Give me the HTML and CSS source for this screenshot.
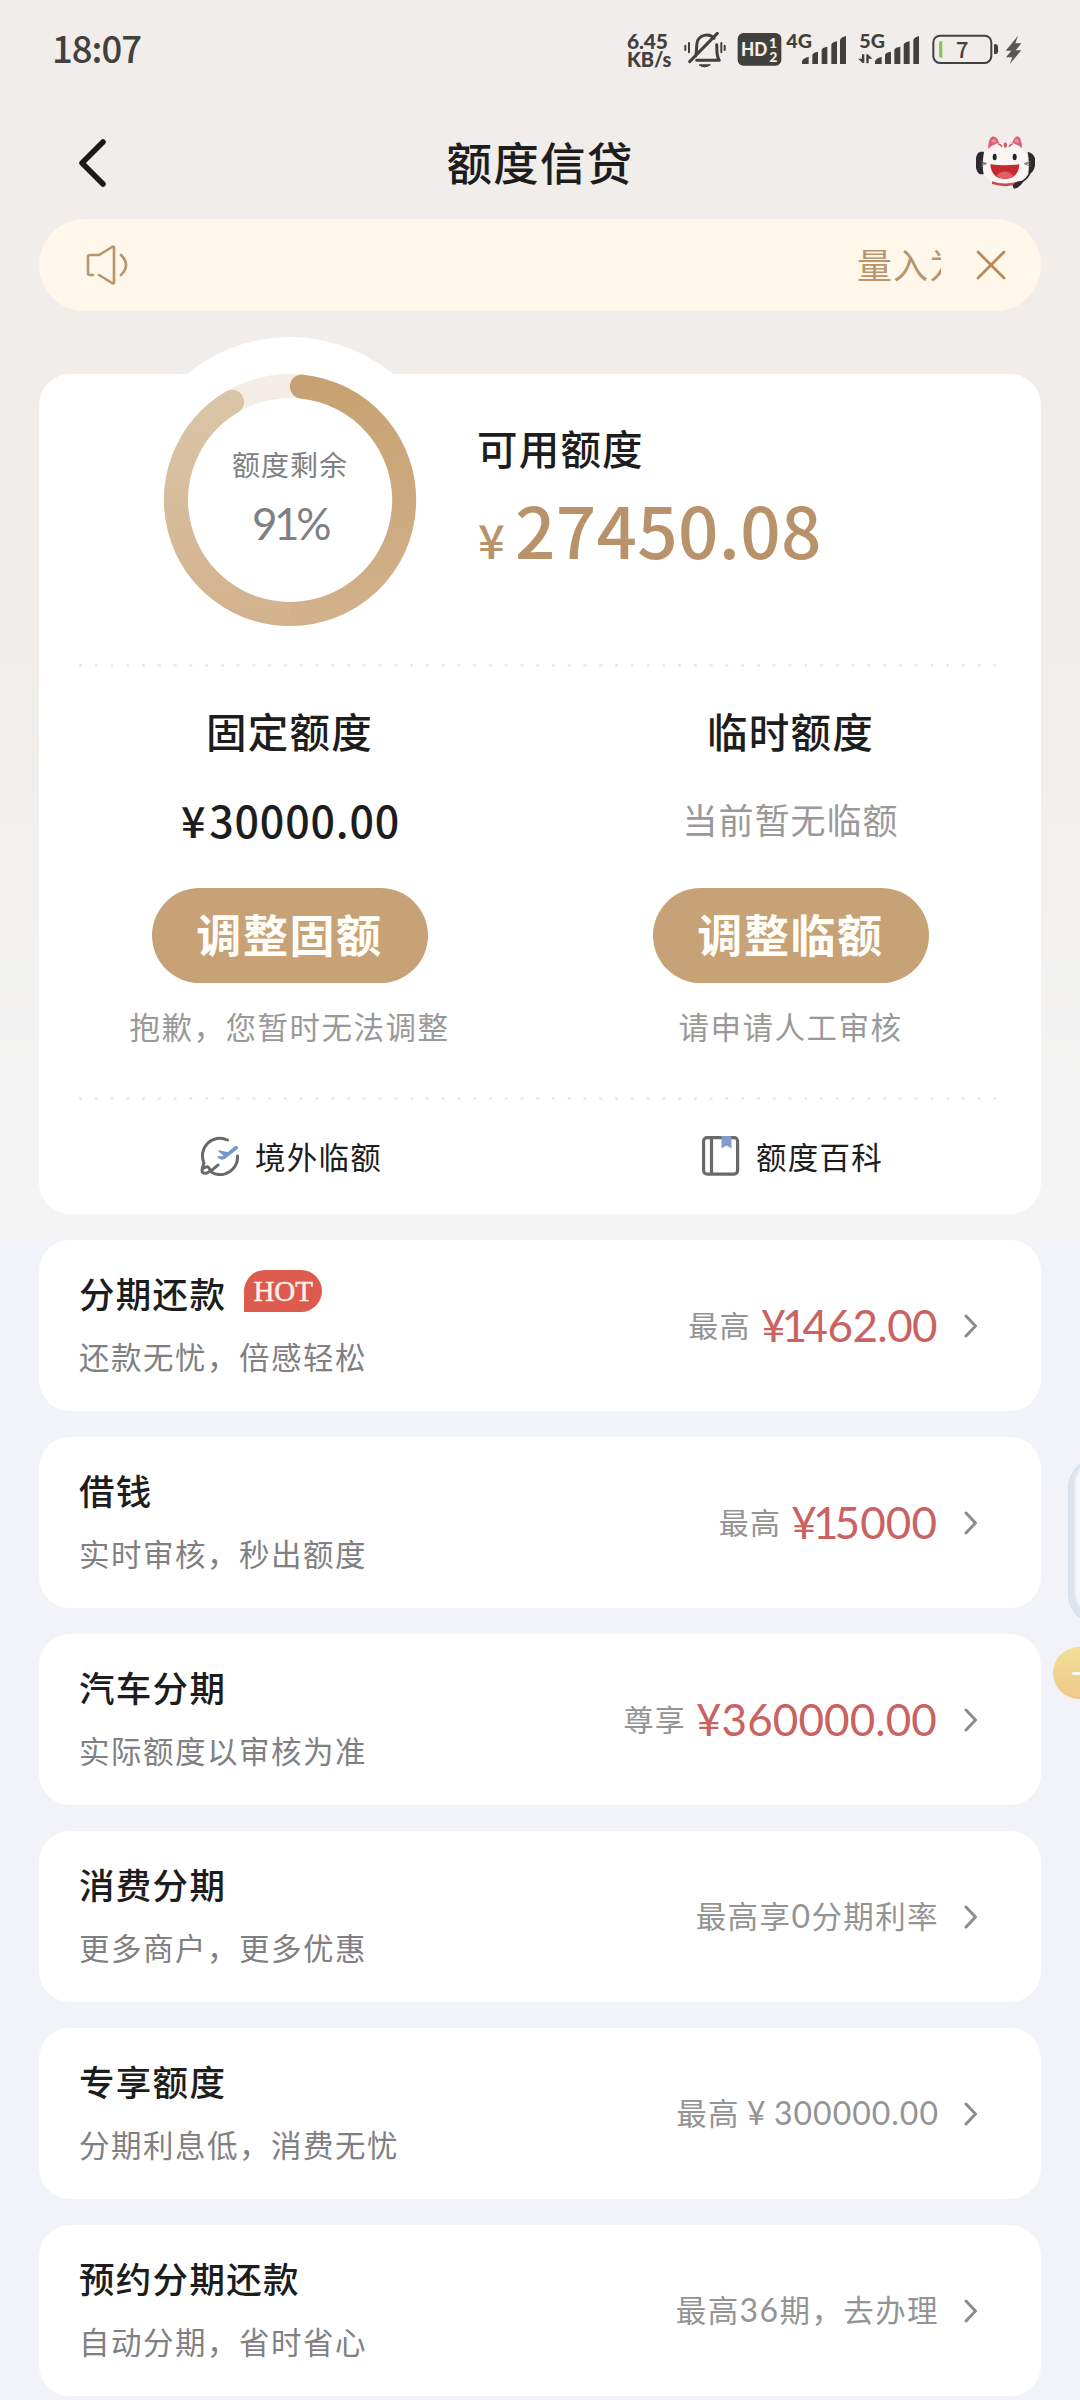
FILE: index.html
```html
<!DOCTYPE html>
<html lang="zh-CN">
<head>
<meta charset="utf-8">
<title>额度信贷</title>
<link rel="stylesheet" href="styles.css">
</head>
<body>
<div class="screen">
  <div class="hero">
    <header class="status">
      <span class="clock">18:07</span>
      <div class="status-icons">
        <div class="speed"><span class="rate">6.45</span><span class="unit">KB/s</span></div>
        <svg width="53" height="40" viewBox="240 90 159 120" fill="none" stroke="#42403c" stroke-linecap="round" stroke-width="9">
          <path d="M287 168c4-11 1-30 5-43 5-18 34-29 50-10M350 134c2 21-2 32 8 47H290M269 185l83-85" stroke-linejoin="round"/>
          <path d="M298 195q16 12 32 0z" fill="#42403c" stroke-width="3"/>
          <path d="M256 137v13M267 129v28M364 129v28M374 137v13" stroke-width="6"/>
        </svg>
        <svg width="50" height="40" viewBox="399 90 150 120">
          <rect x="413" y="99" width="131" height="98" rx="17" fill="#42403c"/>
          <g class="badge-text"><text x="423" y="169" font-size="56" textLength="79" lengthAdjust="spacingAndGlyphs">HD</text><text x="507" y="144" font-size="42">1</text><text x="508" y="186" font-size="42">2</text></g>
        </svg>
        <svg width="72" height="40" viewBox="549 90 216 120" fill="#42403c">
          <text class="net" x="559" y="144" font-size="57" textLength="77" lengthAdjust="spacingAndGlyphs">4G</text>
          <path d="M606 192v-8q2-9 20-14v22zM637 192v-28q3-7 17-9v37zM665 192v-43q3-7 17-9v52zM694 192v-58q3-8 17-10v68zM720 192v-72q3-9 18-12v84z"/>
        </svg>
        <svg width="73" height="40" viewBox="765 90 219 120" fill="#42403c">
          <text class="net" x="778" y="144" font-size="57" textLength="77" lengthAdjust="spacingAndGlyphs">5G</text>
          <path d="M825 192v-8q2-9 20-14v22zM855 192v-28q3-7 18-9v37zM883 192v-43q3-7 18-9v52zM911 192v-58q3-8 18-10v68zM940 192v-72q3-9 17-12v84z"/>
          <path d="M786 163h7v26h-5l-14-13h12zM799 190v-27h5l13 13h-11v14z"/>
        </svg>
        <svg width="100" height="40" viewBox="984 90 300 120">
          <rect x="1000" y="107" width="174" height="82" rx="20" fill="none" stroke="#42403c" stroke-width="6"/>
          <path d="M1182 133h5q7 0 7 7v15q0 7-7 7h-5z" fill="#42403c"/>
          <path d="M1027 123v50h-3q-7 0-7-8v-34q0-8 7-8z" fill="#83c857"/>
          <text class="level" x="1068" y="173" font-size="66">7</text>
          <path d="M1254 107l-37 45h17l-16 20h19l-8 21 35-42h-17l17-21h-18z" fill="#5a5855"/>
        </svg>
      </div>
    </header>
    <nav class="nav">
      <svg class="back" width="40" height="56" viewBox="0 0 40 56"><path d="M30 7L9 28l21 21" fill="none" stroke="#1b1a18" stroke-width="5.5" stroke-linecap="round" stroke-linejoin="round"/></svg>
      <h1>额度信贷</h1>
      <svg class="mascot" width="66" height="60" viewBox="1110 400 198 180">
        <path d="M1288 510q-10 30-37 40" stroke="#2c2a2c" stroke-width="5" fill="none"/>
        <path d="M1158 450q1-38 16-40 12 2 17 19h40q6-18 16-19 13 4 13 40z" fill="#da6174"/>
        <path d="M1168 428q3-12 8-11t7 12M1236 428q3-12 9-11t6 13" fill="#e88f99"/>
        <ellipse cx="1210" cy="493" rx="71" ry="66" fill="#fbf5f5"/>
        <path d="M1146 456h-12q-10 4-12 20v28q3 16 13 20h10q-6-30 1-68zM1277 456q17 4 22 20v23q-5 22-20 24 4-34-2-67z" fill="#2c2a2c"/>
        <path d="M1170 545q39 13 79 0v8q-39 13-79 0z" fill="#ca4a50"/>
        <path d="M1188 433q8 0 12 9M1232 433q-7 0-11 9" stroke="#cf5965" stroke-width="4" fill="none"/><ellipse cx="1210" cy="436" rx="5" ry="8" fill="#cf5965"/>
        <ellipse cx="1178" cy="472" rx="6" ry="10" fill="#242224"/><ellipse cx="1238" cy="472" rx="6" ry="10" fill="#242224"/>
        <path d="M1165 494q43 6 87 0-2 43-43 44-41-1-44-44z" fill="#c62a2d"/><path d="M1183 528q25-25 51 0-25 20-51 0z" fill="#df6260"/>
        <path d="M1135 484l18 8-18 8M1138 491h15M1287 484l-20 8 20 8M1284 491h-16" stroke="#6c686a" stroke-width="2.5" fill="none"/>
        <path d="M1233 556q6-8 22-13l8 4q-10 17-27 20-5-5-3-11z" fill="#2c2a2c"/>
      </svg>
    </nav>

    <div class="notice">
      <svg width="46" height="44" viewBox="0 0 46 44" fill="none" stroke="#b8956c" stroke-width="2.6" stroke-linecap="round" stroke-linejoin="round"><path d="M9 32H6q-2 0-2-2V14q0-2 2-2h9L28 4q2-1 2 1v34q0 2-2 1L15 32M37 12q10 10 0 20"/></svg>
      <div class="ticker"><span>量入为出</span></div>
      <svg width="32" height="32" viewBox="0 0 32 32" fill="none" stroke="#b8895a" stroke-width="2.8" stroke-linecap="round"><path d="M3 3l26 26M29 3L3 29"/></svg>
    </div>

    <section class="quota">
      <div class="summary">
        <div class="gauge">
          <svg width="326" height="326" viewBox="-163 -163 326 326" fill="none">
            <defs>
              <linearGradient id="r" gradientUnits="userSpaceOnUse" x1="0" y1="-126" x2="0" y2="126"><stop offset="0" stop-color="#c7a171"/><stop offset="1" stop-color="#d2b28c"/></linearGradient>
              <linearGradient id="l" gradientUnits="userSpaceOnUse" x1="0" y1="-126" x2="0" y2="126"><stop offset="0" stop-color="#dcc7ab"/><stop offset="1" stop-color="#d2b28c"/></linearGradient>
            </defs>
            <circle r="163" fill="#fff"/>
            <circle r="114" stroke="#f3ede6" stroke-width="24"/>
            <path d="M0 114A114 114 0 0 1-57.9-98.2" stroke="url(#l)" stroke-width="24" stroke-linecap="round"/>
            <path d="M11.9-113.4A114 114 0 0 1 0 114" stroke="url(#r)" stroke-width="24"/>
            <circle cx="11.9" cy="-113.4" r="12" fill="#c7a171"/>
          </svg>
          <div class="gauge-label"><span>额度剩余</span><b>91%</b></div>
        </div>
        <div class="available">
          <h2>可用额度</h2>
          <p class="balance"><span>¥</span>27450.08</p>
        </div>
      </div>
      <div class="dots"></div>
      <div class="columns">
        <div class="column">
          <h2>固定额度</h2>
          <p class="fixed">¥<span>30000.00</span></p>
          <button>调整固额</button>
          <p class="note">抱歉，您暂时无法调整</p>
        </div>
        <div class="column">
          <h2>临时额度</h2>
          <p class="none">当前暂无临额</p>
          <button>调整临额</button>
          <p class="note">请申请人工审核</p>
        </div>
      </div>
      <div class="dots"></div>
      <div class="links">
        <a><svg width="40" height="40" viewBox="0 0 40 40" fill="none" stroke="#69696b" stroke-width="3" stroke-linecap="round"><path d="M27.500 4A17.500 17.500 0 0 0 4 27C1 35 1 38 7 37Q13 34 18 29M4 32Q8 29 9.500 33M37.500 20A17.500 17.500 0 0 1 12 36.500"/><path d="M18 21h5l12-10q3-1 2 1.500L25 22l-3 1zM19 15l9 2-3 3z" fill="#7399ca" stroke="#7399ca" stroke-width="1.500" stroke-linejoin="round"/></svg>境外临额</a>
        <a><svg width="40" height="42" viewBox="0 0 40 42" fill="none" stroke="#69696b" stroke-width="3.200"><rect x="2.600" y="2.600" width="34" height="36.500" rx="3.500"/><path d="M10.500 3v36"/><path d="M20.500 1h10v12.500l-5-3-5 3z" fill="#809ccb" stroke="none"/></svg>额度百科</a>
      </div>
    </section>
  </div>

  <main class="list">
    <a class="item"><div class="text"><h3>分期还款<i class="hot">HOT</i></h3><p>还款无忧，倍感轻松</p></div><span class="hint">最高</span><span class="money tight">¥<i>1</i>462.00</span><svg class="go" viewBox="0 0 14 24"><path d="M2 2l9.500 10L2 22"/></svg></a>
    <a class="item"><div class="text"><h3>借钱</h3><p>实时审核，秒出额度</p></div><span class="hint">最高</span><span class="money">¥<i>1</i>5000</span><svg class="go" viewBox="0 0 14 24"><path d="M2 2l9.500 10L2 22"/></svg></a>
    <a class="item"><div class="text"><h3>汽车分期</h3><p>实际额度以审核为准</p></div><span class="hint">尊享</span><span class="money">¥360000.00</span><svg class="go" viewBox="0 0 14 24"><path d="M2 2l9.500 10L2 22"/></svg></a>
    <a class="item"><div class="text"><h3>消费分期</h3><p>更多商户，更多优惠</p></div><span class="plain">最高享<em>0</em>分期利率</span><svg class="go" viewBox="0 0 14 24"><path d="M2 2l9.500 10L2 22"/></svg></a>
    <a class="item"><div class="text"><h3>专享额度</h3><p>分期利息低，消费无忧</p></div><span class="plain">最高<em class="yen">¥</em><em class="sum">300000.00</em></span><svg class="go" viewBox="0 0 14 24"><path d="M2 2l9.500 10L2 22"/></svg></a>
    <a class="item"><div class="text"><h3>预约分期还款</h3><p>自动分期，省时省心</p></div><span class="plain">最高<em>36</em>期，去办理</span><svg class="go" viewBox="0 0 14 24"><path d="M2 2l9.500 10L2 22"/></svg></a>
  </main>

  <div class="side-panel"></div>
  <div class="side-coin"><i></i></div>
</div>
</body>
</html>
```
FILE: styles.css
```css
* { box-sizing: border-box; margin: 0; padding: 0; }
body { font-family: "Noto Sans CJK SC", sans-serif; color: #1d1d1d; }
h1, h2, h3 { font-weight: 500; }
i, em { font-style: normal; }
svg { display: block; flex: none; }
.screen { position: relative; width: 1080px; height: 2400px; overflow: hidden; background: #f2f3f8; }

.hero { height: 1240px; padding: 0 39px; background: linear-gradient(#f0edea 0, #f0edea 620px, #f4f4f4 1120px); }
.status { height: 107px; margin: 0 -39px; padding: 0 52px 7px 52px; display: flex; align-items: center; justify-content: space-between; color: #42403c; }
.clock { font-weight: 500; font-size: 36.500px; line-height: 50px; letter-spacing: -1px; padding-bottom: 5px; }
.status-icons { display: flex; align-items: center; height: 40px; }
.speed { width: 53px; display: flex; flex-direction: column; font: 900 21px/19px Lato, sans-serif; }
.rate { letter-spacing: -.2px; }
.unit { font-size: 20px; letter-spacing: -.1px; }
.badge-text { fill: #f0edea; font-family: Lato, sans-serif; font-weight: 900; }
.net { font-family: Lato, sans-serif; font-weight: 900; }
.level { font-family: "Noto Sans CJK SC", sans-serif; font-weight: 500; fill: #42403c; }

.nav { height: 112px; display: grid; grid-template-columns: 66px 1fr 66px; align-items: center; padding: 0 3px 0 3px; }
.back { margin-left: 31px; }
.nav h1 { font-size: 45.500px; line-height: 60px; letter-spacing: 1.300px; padding-bottom: 5px; text-align: center; }

.notice { height: 92px; border-radius: 46px; background: #fef7ea; display: flex; align-items: center; padding: 0 34px 0 45px; }
.ticker { width: 84px; margin-left: auto; margin-right: 34px; overflow: hidden; white-space: nowrap; font-size: 35px; line-height: 50px; letter-spacing: 1px; color: #b8956c; padding-bottom: 3px; }

.quota { margin-top: 63px; height: 840px; width: 1002px; background: #fff; border-radius: 31px; display: flex; flex-direction: column; }
.summary { height: 290px; display: flex; padding-left: 88px; }
.gauge { margin-top: -37px; width: 326px; height: 326px; display: grid; }
.gauge > * { grid-area: 1 / 1; }
.gauge-label { display: flex; flex-direction: column; align-items: center; padding-top: 107px; color: #7f8083; font-size: 28px; line-height: 40px; letter-spacing: 1px; }
.gauge-label b { font: 400 44px/54px Lato, sans-serif; letter-spacing: -3.500px; margin-top: 12px; }
h2 { font-size: 40.500px; line-height: 60px; letter-spacing: 1.200px; }
.available { padding: 44px 0 0 24px; }
.balance { font-weight: 500; font-size: 71px; line-height: 90px; color: #b8926a; margin-top: 5px; letter-spacing: .3px; display: flex; align-items: baseline; }
.balance span { font-size: 47px; width: 38px; padding-left: 1px; }
.dots { height: 3px; margin: 0 45px 0 40px; background: radial-gradient(circle at 1.500px 1.500px, #eaeaea 1.300px, transparent 1.900px) 0 0 / 15.770px 3px repeat-x; }
.columns { display: grid; grid-template-columns: 1fr 1fr; height: 430px; }
.column { display: flex; flex-direction: column; align-items: center; padding-top: 34px; }
.column p { white-space: nowrap; }
.fixed, .none { height: 60px; line-height: 60px; margin-top: 28px; }
.fixed { font-size: 43px; font-weight: 500; letter-spacing: .8px; padding-left: 2px; }
.fixed span { margin-left: 3px; }
.none { font-size: 35px; letter-spacing: 1px; color: #999; }
button { width: 276px; height: 95px; margin-top: 39px; border: 0; border-radius: 48px; background: #c6a276; color: #fffdf8; font: 700 45px/60px "Noto Sans CJK SC", sans-serif; letter-spacing: 1.600px; padding-bottom: 4px; }
.note { font-size: 30.500px; line-height: 40px; letter-spacing: 1.500px; color: #999; margin-top: 23px; }
.links { height: 114px; display: grid; grid-template-columns: 1fr 1fr; padding-bottom: 3px; }
.links a { display: flex; align-items: center; justify-content: center; gap: 15px; font-size: 30.500px; letter-spacing: 1.300px; padding-left: 3px; }

.list { padding: 0 39px; display: flex; flex-direction: column; gap: 26px; }
.item { width: 1002px; height: 171px; border-radius: 31px; background: #fff; display: flex; align-items: center; padding: 0 63px 0 40px; white-space: nowrap; }
.text { flex: 1; align-self: flex-start; padding-top: 28px; }
h3 { font-size: 35.500px; line-height: 50px; letter-spacing: 1.300px; display: flex; align-items: center; }
.text p { margin-top: 16px; font-size: 30.500px; line-height: 44px; letter-spacing: 1.500px; color: #808083; }
.hot { width: 78px; height: 42px; margin: -5px 0 0 18px; border-radius: 21px 21px 21px 0; background: #dd5b4e; color: #fff0e9; text-align: center; font: 400 29px/42px "Liberation Serif", serif; letter-spacing: 0; -webkit-text-stroke: .5px #fff0e9; }
.hint { font-size: 30px; line-height: 44px; letter-spacing: 1.200px; color: #949494; margin: -4px 10px 0 0; }
.money { font: 400 44px/54px Lato, sans-serif; letter-spacing: .1px; color: #c96260; margin-top: -2px; }
.money i { margin: 0 -4px; }
.money.tight { letter-spacing: -.6px; }
.plain { font-size: 30.500px; line-height: 44px; letter-spacing: 1.400px; color: #949494; margin-top: -3px; }
.plain em { font-family: Lato, sans-serif; font-size: 32px; }
.plain .yen { margin: 0 7px 0 7px; }
.plain .sum { letter-spacing: 1px; }
.go { width: 14px; height: 24px; margin-left: 25px; fill: none; stroke: #8c8c8c; stroke-width: 3; stroke-linecap: round; stroke-linejoin: round; }
.money + .go { margin-left: 27px; }

.side-panel { position: absolute; left: 1068px; top: 1458px; width: 60px; height: 166px; border-radius: 30px; background: #f5f7fc; border: 2px solid #d6e0ee; box-shadow: inset 5px -3px 2px #dfe4ec; }
.side-coin { position: absolute; left: 1053px; top: 1647px; width: 52px; height: 52px; border-radius: 50%; background: linear-gradient(#f0df95, #efc98d); display: flex; align-items: center; justify-content: center; }
.side-coin i { width: 15px; height: 3px; border-radius: 2px; background: #fffaf0; }
```
